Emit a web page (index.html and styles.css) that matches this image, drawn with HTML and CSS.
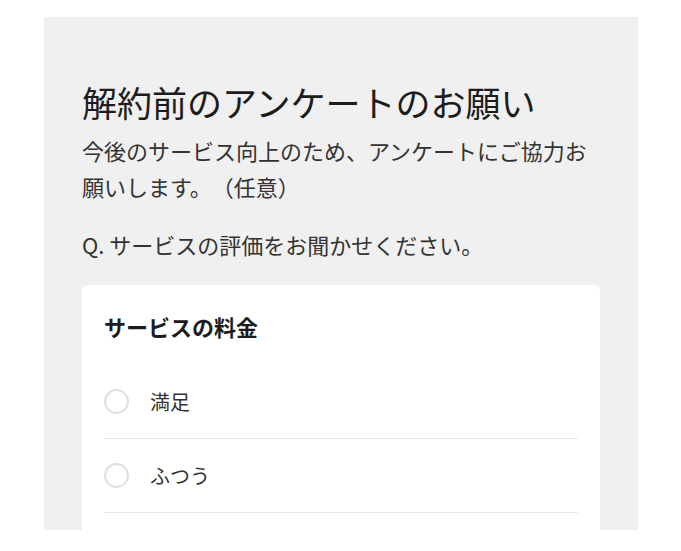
FILE: index.html
```html
<!DOCTYPE html>
<html lang="ja">
<head>
<meta charset="utf-8">
<title>解約前のアンケート</title>
<link rel="stylesheet" href="styles.css">
</head>
<body>
<main class="panel">
  <h1 class="title">解約前のアンケートのお願い</h1>
  <p class="lead">今後のサービス向上のため、アンケートにご協力お願いします。（任意）</p>
  <p class="question">Q. サービスの評価をお聞かせください。</p>
  <section class="card">
    <h2 class="card-title">サービスの料金</h2>
    <ul class="options">
      <li class="option"><span class="radio"></span><span class="option-label">満足</span></li>
      <li class="option"><span class="radio"></span><span class="option-label">ふつう</span></li>
    </ul>
  </section>
</main>
</body>
</html>
```

FILE: styles.css
```css
html, body {
  margin: 0;
  padding: 0;
  background: #ffffff;
}
body {
  font-family: "Noto Sans CJK JP", "Noto Sans", sans-serif;
  color: #2a2a2a;
  text-spacing-trim: space-all;
}
.panel {
  box-sizing: border-box;
  margin: 17px 0 0 44px;
  width: 594px;
  height: 513px;
  overflow: hidden;
  background: #f0f0f0;
  padding: 61px 38px 0 38px;
}
.title {
  margin: 0;
  font-size: 35px;
  line-height: 48px;
  font-weight: 400;
  color: #1c1c1c;
}
.lead {
  margin: 6px 0 0 0;
  font-size: 22px;
  line-height: 36px;
  color: #333;
}
.question {
  margin: 22px 0 0 0;
  font-size: 22px;
  line-height: 36px;
  color: #333;
}
.card {
  margin-top: 23px;
  background: #ffffff;
  border-radius: 6px;
  padding: 23px 22px 60px 22px;
}
.card-title {
  margin: 0;
  font-size: 22px;
  line-height: 36px;
  font-weight: 700;
  color: #1c1c1c;
}
.options {
  list-style: none;
  margin: 21px 0 0 0;
  padding: 0;
}
.option {
  display: flex;
  align-items: center;
  gap: 21px;
  height: 73px;
  border-bottom: 1px solid #e9e9e9;
}
.radio {
  box-sizing: border-box;
  width: 25px;
  height: 25px;
  border-radius: 50%;
  border: 2px solid #e0e0e0;
  background: #fff;
  flex: none;
}
.option-label {
  font-size: 20px;
  line-height: 30px;
  color: #333;
}
```
